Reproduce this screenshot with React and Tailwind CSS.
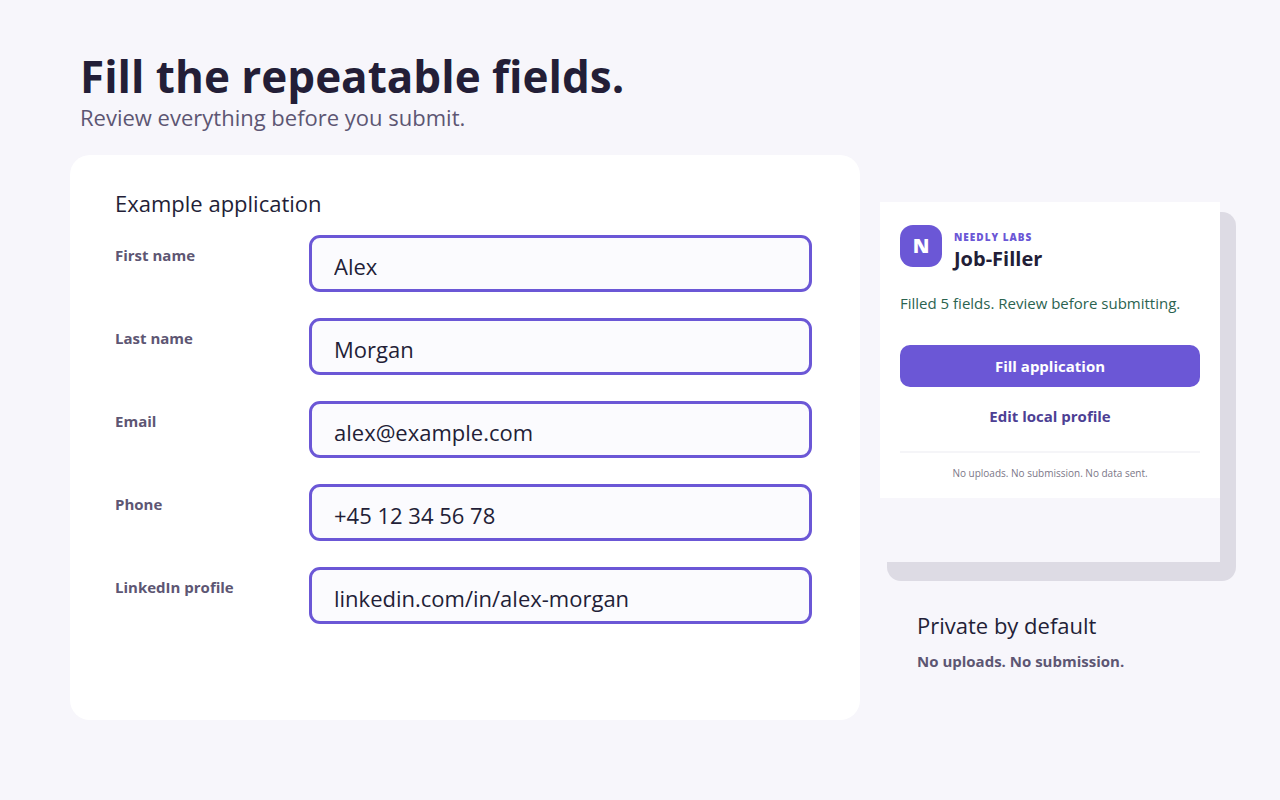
const fields = [
  { id: 'first-name', label: 'First name', value: 'Alex', type: 'text' },
  { id: 'last-name', label: 'Last name', value: 'Morgan', type: 'text' },
  { id: 'email', label: 'Email', value: 'alex@example.com', type: 'email' },
  { id: 'phone', label: 'Phone', value: '+45 12 34 56 78', type: 'tel' },
  { id: 'linkedin', label: 'LinkedIn profile', value: 'linkedin.com/in/alex-morgan', type: 'text' },
];

function Field({ id, label, value, type }) {
  return (
    <div className="flex items-start">
      <label htmlFor={id} className="w-[194px] shrink-0 pt-2.5 text-[15px] leading-5 font-bold text-[#5d5673]">
        {label}
      </label>
      <input
        id={id}
        type={type}
        defaultValue={value}
        className="h-[57px] min-w-0 flex-1 rounded-[11px] border-3 border-[#6b57d6] bg-[#fbfbfe] px-[22px] pt-1 text-[22px] text-[#231e37] outline-none"
      />
    </div>
  );
}

function ApplicationCard() {
  return (
    <section className="min-w-0 flex-1 rounded-[20px] bg-white pt-[34px] pr-12 pb-24 pl-[45px]">
      <h2 className="text-[22px] leading-7 text-[#231e37]">Example application</h2>
      <form className="mt-[18px] flex flex-col gap-[26px]">
        {fields.map((f) => (
          <Field key={f.id} {...f} />
        ))}
      </form>
    </section>
  );
}

function Popup() {
  return (
    <div className="relative">
      <div className="absolute top-2.5 -right-4 -bottom-[19px] left-[7px] rounded-[14px] bg-[#dddbe4]" />
      <div className="relative bg-[#f7f6fb] pb-16">
        <div className="bg-white px-5 pt-[23px] pb-[17px]">
          <div className="flex items-start gap-3">
            <div className="flex size-[42px] items-center justify-center rounded-[13px] bg-[#6b57d6] text-[20px] font-extrabold text-white">
              N
            </div>
            <div className="pt-1">
              <p className="text-[10px] leading-4 font-extrabold tracking-[1px] text-[#6b57d6]">NEEDLY LABS</p>
              <h2 className="text-[20px] leading-7 font-bold text-[#231e37]">Job-Filler</h2>
            </div>
          </div>
          <p className="mt-5 text-[15px] leading-5 text-[#2b6350]">Filled 5 fields. Review before submitting.</p>
          <button type="button" className="mt-8 h-[42px] w-full rounded-[10px] bg-[#6b57d6] text-[15px] font-bold text-white">
            Fill application
          </button>
          <button type="button" className="mt-2 h-[42px] w-full text-[15px] font-bold text-[#4d3f94]">
            Edit local profile
          </button>
          <p className="mt-3.5 border-t-2 border-[#f5f5f8] pt-3 text-center text-[10px] leading-4 text-[#7b7788]">
            No uploads. No submission. No data sent.
          </p>
        </div>
      </div>
    </div>
  );
}

export default function App() {
  return (
    <div className="min-h-screen bg-[#f7f6fb] pt-[50px] pr-[60px] pb-20 pl-[70px] font-['Open_Sans','Noto_Sans',sans-serif]">
      <header className="pl-2.5">
        <h1 className="text-[44px] leading-[53px] font-bold text-[#231e37]">Fill the repeatable fields.</h1>
        <p className="text-[22px] leading-7 text-[#5d5673]">Review everything before you submit.</p>
      </header>
      <main className="mt-6 flex gap-5">
        <ApplicationCard />
        <aside className="w-[340px] shrink-0 pt-[47px]">
          <Popup />
          <div className="mt-[49px] pl-[37px]">
            <h2 className="text-[22px] leading-7 text-[#231e37]">Private by default</h2>
            <p className="mt-3 text-[15px] leading-5 font-bold text-[#5d5673]">No uploads. No submission.</p>
          </div>
        </aside>
      </main>
    </div>
  );
}
